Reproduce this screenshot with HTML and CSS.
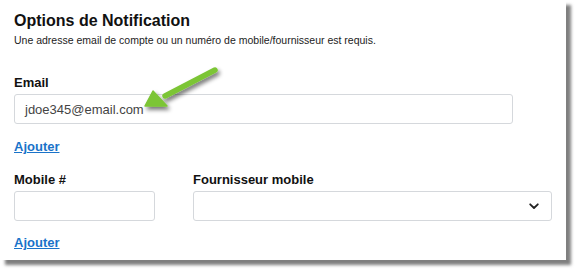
FILE: index.html
```html
<!DOCTYPE html>
<html lang="fr">
<head>
<meta charset="utf-8">
<link rel="stylesheet" href="styles.css">
</head>
<body>
<div class="card">
  <h1 class="title">Options de Notification</h1>
  <p class="subtitle">Une adresse email de compte ou un numéro de mobile/fournisseur est requis.</p>

  <div class="field email-field">
    <label class="label">Email</label>
    <div class="input email-input">jdoe345@email.com</div>
  </div>
  <a class="add-link" href="#">Ajouter</a>

  <div class="row">
    <div class="field mobile-field">
      <label class="label">Mobile #</label>
      <div class="input mobile-input"></div>
    </div>
    <div class="field provider-field">
      <label class="label">Fournisseur mobile</label>
      <div class="input select-input">
        <svg class="chevron" width="10" height="7" viewBox="0 0 10 7"><path d="M1.2 1.3 L5 5 L8.8 1.3" fill="none" stroke="#222" stroke-width="1.8" stroke-linecap="round" stroke-linejoin="round"/></svg>
      </div>
    </div>
  </div>
  <a class="add-link last" href="#">Ajouter</a>

  <svg class="arrow" width="100" height="60" viewBox="0 0 100 60">
    <defs>
      <filter id="sh" x="-30%" y="-30%" width="160%" height="160%">
        <feGaussianBlur in="SourceAlpha" stdDeviation="2"/>
        <feOffset dx="2" dy="3" result="b"/>
        <feComponentTransfer><feFuncA type="linear" slope="0.55"/></feComponentTransfer>
        <feMerge><feMergeNode/><feMergeNode in="SourceGraphic"/></feMerge>
      </filter>
    </defs>
    <g filter="url(#sh)">
      <path d="M80 10 L30 36" stroke="#7cc536" stroke-width="5.5" stroke-linecap="round"/>
      <path d="M10 46 L18 31 L32 46 Z" fill="#7cc536" stroke="#7cc536" stroke-width="1.5" stroke-linejoin="round"/>
    </g>
  </svg>
</div>
</body>
</html>
```
FILE: styles.css
```css
* { box-sizing: border-box; }
html, body { margin: 0; padding: 0; background: #fff; }
body {
  width: 579px;
  height: 274px;
  overflow: hidden;
  font-family: "Liberation Sans", Arial, sans-serif;
  color: #111;
}
.card {
  position: relative;
  width: 566px;
  height: 260px;
  background: #fff;
  box-shadow: 5px 5px 3px rgba(0,0,0,0.5);
  padding: 11px 14px 0 14px;
}
.title {
  margin: 0;
  font-size: 16px;
  font-weight: bold;
  line-height: 20px;
}
.subtitle {
  margin: 3px 0 0 0;
  font-size: 10.5px;
  line-height: 13px;
  color: #222;
}
.field { display: flex; flex-direction: column; }
.email-field { margin-top: 28px; }
.label {
  font-size: 13px;
  font-weight: bold;
  line-height: 15px;
  margin-bottom: 4px;
}
.input {
  height: 30px;
  border: 1px solid #d5d8dc;
  border-radius: 3px;
  background: #fff;
}
.email-input {
  width: 499px;
  padding: 0 10px;
  display: flex;
  align-items: center;
  font-size: 13px;
  color: #444;
}
.add-link {
  display: inline-block;
  margin-top: 15px;
  font-size: 13px;
  font-weight: bold;
  line-height: 15px;
  color: #1a73c9;
  text-decoration: underline;
}
.row {
  display: flex;
  gap: 38px;
  margin-top: 17px;
}
.mobile-input { width: 141px; }
.select-input {
  width: 359px;
  display: flex;
  align-items: center;
  justify-content: flex-end;
  padding-right: 12px;
}
.add-link.last { margin-top: 14px; }
.arrow {
  position: absolute;
  left: 135px;
  top: 60px;
}
```
